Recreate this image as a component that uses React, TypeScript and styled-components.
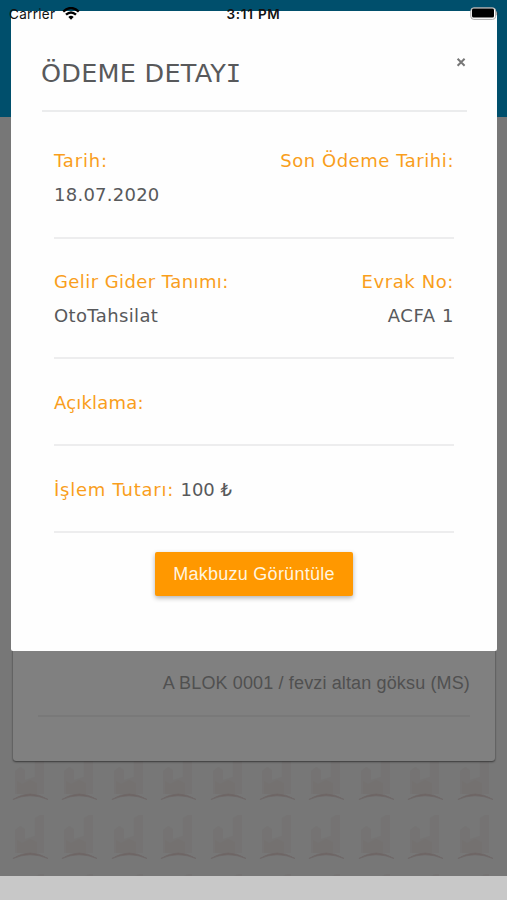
import React from 'react';
import styled, { createGlobalStyle } from 'styled-components';

const GlobalStyle = createGlobalStyle`
  * { box-sizing: border-box; }
  body { margin: 0; background: #c8c8c8; font-family: "Liberation Sans", Arial, sans-serif; }
`;

const Screen = styled.div`
  position: relative;
  width: 507px;
  height: 900px;
  overflow: hidden;
  background: #c8c8c8;
`;

const Page = styled.main`
  height: 875.5px;
  display: flex;
  flex-direction: column;
  background: #777777;
  overflow: hidden;
  isolation: isolate;
`;

const Header = styled.header`
  flex: none;
  height: 117px;
  background: #004f6c;
`;

const Card = styled.section`
  flex: none;
  height: 644px;
  margin: 0 12px 0 13px;
  padding: 0 25px 44px;
  display: flex;
  flex-direction: column;
  justify-content: flex-end;
  border-radius: 0 0 3px 3px;
  background: #808080;
  box-shadow: 0 1px 2px rgba(0, 0, 0, 0.5), 0 0 1px rgba(0, 0, 0, 0.3);
`;

const Owner = styled.div`
  padding-bottom: 21px;
  border-bottom: 2px solid #797979;
  color: #505050;
  font-size: 18px;
  line-height: 22px;
  letter-spacing: 0.14px;
  text-align: right;
`;

const Pattern = styled.div`
  flex: none;
  display: grid;
  grid-template-columns: repeat(10, 49.4px);
  grid-auto-rows: 59px;
  margin: -7px 0 0 10px;
`;

const CardLayer = styled.div`
  position: relative;
  z-index: 1;
`;

const Overlay = styled.div`
  position: absolute;
  inset: 0;
  padding: 11px 10px 0 11px;
`;

const Dialog = styled.section`
  height: 640px;
  padding: 37px 30px 0 31px;
  display: flex;
  flex-direction: column;
  border-radius: 2px;
  background: #fefefe;
  color: #58595b;
  font-family: "DejaVu Sans", Verdana, sans-serif;
`;

const DialogHeader = styled.div`
  height: 64px;
  display: flex;
  justify-content: space-between;
  align-items: flex-start;
  border-bottom: 2px solid #ebeced;
`;

const Title = styled.h1`
  margin: 8px 0 0 -1px;
  display: flex;
  font-size: 25.5px;
  line-height: 34px;
  font-weight: 400;
  white-space: nowrap;
  letter-spacing: 0.25px;
`;

const SerifI = styled.span`
  font-family: "DejaVu Sans Mono", monospace;
  margin-left: -0.5px;
`;

const Close = styled.button`
  width: 11px;
  height: 11px;
  margin-top: 9px;
  padding: 0;
  display: flex;
  border: 0;
  background: none;
`;

const Details = styled.div`
  padding: 0 13px 0 12px;
  display: flex;
  flex-direction: column;
`;

const Row = styled.div<{ $height: number; $top: number }>`
  height: ${(p) => p.$height}px;
  padding-top: ${(p) => p.$top}px;
  display: flex;
  justify-content: space-between;
  align-items: flex-start;
  border-bottom: 2px solid #ededee;
`;

const Field = styled.div<{ $end?: boolean }>`
  display: flex;
  flex-direction: column;
  align-items: ${(p) => (p.$end ? 'flex-end' : 'flex-start')};
`;

const Line = styled.div<{ $spacing?: number }>`
  font-size: 18px;
  line-height: 34px;
  white-space: pre;
  letter-spacing: ${(p) => p.$spacing ?? 0}px;
`;

const Label = styled.span<{ $spacing?: number }>`
  color: #f99e1c;
  letter-spacing: ${(p) => p.$spacing ?? 0}px;
`;

const ReceiptButton = styled.button`
  align-self: center;
  width: 198px;
  height: 44px;
  margin: 19px 0 0 0;
  padding: 0;
  border: 0;
  border-radius: 2px;
  background: #ff9800;
  box-shadow: 0 2px 5px rgba(0, 0, 0, 0.3);
  color: #fff4df;
  font: 18px "Liberation Sans", Arial, sans-serif;
  letter-spacing: 0.25px;
  white-space: nowrap;
`;

const StatusBar = styled.div`
  position: absolute;
  inset: 0 0 auto 0;
  height: 27px;
  padding: 0 9px;
  display: grid;
  grid-template-columns: 1fr auto 1fr;
  align-items: center;
  color: #111;
  font-family: Inter, "Liberation Sans", sans-serif;
  font-size: 13.5px;
`;

const Carrier = styled.div`
  display: flex;
  align-items: center;
  gap: 7px;
  letter-spacing: 0.3px;
`;

const Clock = styled.div`
  font-weight: 600;
  font-size: 13.5px;
  letter-spacing: 0.75px;
`;

const BatteryIcon = styled.svg`
  justify-self: end;
`;

const Tile = () => (
  <svg width="49.4" height="59" viewBox="0 0 49.4 59">
    <g opacity=".6">
      <path d="M5 17l5-4 5 3v10l10-3V5l5-3h4v38H5z" fill="#706b69" opacity=".4" />
      <path d="M7 27l5 3 8-4 7 3v11H7z" fill="#746967" opacity=".4" />
      <path d="M3 45.5Q20 34.5 38 45.5Q20 38 3 45.5z" fill="#685856" stroke="#6b605f" strokeWidth=".8" />
    </g>
  </svg>
);

const CloseIcon = () => (
  <svg width="11" height="11" viewBox="0 0 11 11">
    <path d="M1.6 1.8l7 7M8.6 1.8l-7 7" stroke="#777" strokeWidth="2" />
  </svg>
);

const WifiIcon = () => (
  <svg width="18" height="14" viewBox="0 0 18 14" fill="none" stroke="#000" strokeWidth="2.4">
    <path d="M1.2 4.6Q9-2.5 16.8 4.6M4 7.7Q9 3.2 14 7.7" />
    <path d="M6.3 9.9Q9 7.5 11.7 9.9L9 12.7z" fill="#000" stroke="none" />
  </svg>
);

export default function App() {
  return (
    <Screen>
      <GlobalStyle />
      <Page>
        <Header />
        <CardLayer>
          <Card>
            <Owner>A BLOK 0001 / fevzi altan göksu (MS)</Owner>
          </Card>
        </CardLayer>
        <Pattern>
          {Array.from({ length: 30 }, (_, i) => (
            <Tile key={i} />
          ))}
        </Pattern>
      </Page>
      <Overlay>
        <Dialog>
          <DialogHeader>
            <Title>ÖDEME DETAY<SerifI>I</SerifI></Title>
            <Close aria-label="Kapat"><CloseIcon /></Close>
          </DialogHeader>
          <Details>
            <Row $height={127} $top={32}>
              <Field>
                <Line><Label $spacing={0.85}>Tarih:</Label></Line>
                <Line $spacing={0.25}>18.07.2020</Line>
              </Field>
              <Field $end>
                <Line><Label $spacing={0.55}>Son Ödeme Tarihi:</Label></Line>
              </Field>
            </Row>
            <Row $height={120} $top={26}>
              <Field>
                <Line><Label $spacing={0.42}>Gelir Gider Tanımı:</Label></Line>
                <Line $spacing={0.37}>OtoTahsilat</Line>
              </Field>
              <Field $end>
                <Line><Label $spacing={0.6}>Evrak No:</Label></Line>
                <Line $spacing={0.6}>ACFA 1</Line>
              </Field>
            </Row>
            <Row $height={87} $top={27}>
              <Line><Label $spacing={0.2}>Açıklama:</Label></Line>
            </Row>
            <Row $height={87} $top={27}>
              <Line><Label $spacing={0.75}>İşlem Tutarı: </Label>100 ₺</Line>
            </Row>
            <ReceiptButton>Makbuzu Görüntüle</ReceiptButton>
          </Details>
        </Dialog>
      </Overlay>
      <StatusBar>
        <Carrier>Carrier <WifiIcon /></Carrier>
        <Clock>3:11 PM</Clock>
        <BatteryIcon width="28" height="14" viewBox="0 0 28 14">
          <rect x=".8" y=".8" width="24.8" height="11.6" rx="3" fill="#fff" stroke="#aaa" />
          <rect x="2" y="1.6" width="22" height="8.8" rx="1.5" fill="#000" />
          <path d="M26.7 4.5q1.8 2 0 4z" fill="#333" />
        </BatteryIcon>
      </StatusBar>
    </Screen>
  );
}
